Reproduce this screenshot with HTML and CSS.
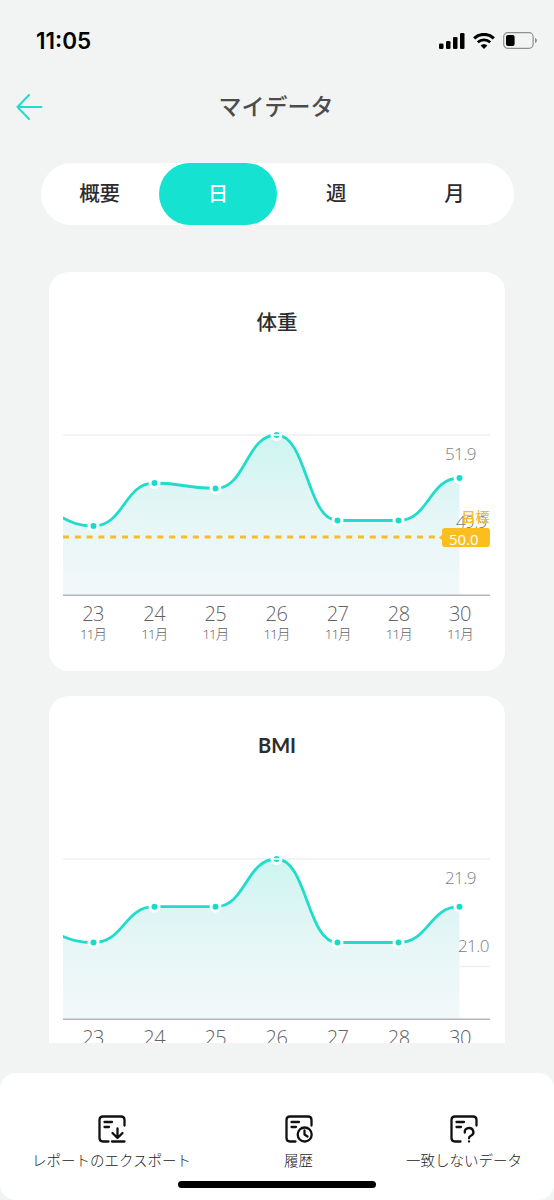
FILE: index.html
```
<!DOCTYPE html>
<html lang="ja">
<head>
  <meta charset="utf-8">
  <title>マイデータ</title>
  <meta name="viewport" content="width=device-width, initial-scale=1.0">
  <link rel="stylesheet" href="styles.css">
</head>
<body>
  <div class="status-bar">
    <span class="time">11:05</span>
    <div class="status-icons">
      <svg class="signal" width="26" height="16" viewBox="0 0 26 16">
        <rect x="0" y="10.5" width="4.5" height="5.5" rx="1.3"/>
        <rect x="7" y="8" width="4.5" height="8" rx="1.3"/>
        <rect x="14" y="4" width="4.5" height="12" rx="1.3"/>
        <rect x="21" y="0" width="4.5" height="16" rx="1.3"/>
      </svg>
      <svg class="wifi" width="22" height="16" viewBox="0 0 22 16">
        <path d="M1.2 5.4a14.2 14.2 0 0 1 19.6 0" fill="none" stroke="#000" stroke-width="3.2"/>
        <path d="M4.8 9.3a9.2 9.2 0 0 1 12.4 0" fill="none" stroke="#000" stroke-width="2.9"/>
        <path d="M7.6 12.6a5 5 0 0 1 6.8 0L11 16z"/>
      </svg>
      <svg class="battery" width="34" height="17" viewBox="0 0 34 17">
        <rect x=".7" y=".7" width="29.4" height="15.6" rx="4" fill="none" stroke="#8e8f8f" stroke-width="1.2"/>
        <rect x="3" y="3" width="8.6" height="11" rx="2"/>
        <path d="M32 5.8v5.4q2-1 2-2.7t-2-2.7z" fill="#8e8f8f"/>
      </svg>
    </div>
  </div>

  <div class="app-bar">
    <svg class="back" width="27" height="26" viewBox="0 0 27 26">
      <path d="M13 1L1.5 13L13 25M1.5 13H25.5"/>
    </svg>
    <h1>マイデータ</h1>
  </div>

  <div class="tabs">
    <div class="tab">概要</div>
    <div class="tab active">日</div>
    <div class="tab">週</div>
    <div class="tab">月</div>
  </div>

  <div class="main-content">
    <div class="card">
      <h2>体重</h2>
      <svg class="chart" width="427" height="170" viewBox="0 0 427 170">
        <defs>
          <linearGradient id="fill" gradientUnits="userSpaceOnUse" x1="0" y1="8" x2="0" y2="170">
            <stop offset="0" stop-color="#cdf5f1"/>
            <stop offset=".55" stop-color="#e7f6f6"/>
            <stop offset="1" stop-color="#f3f8fa"/>
          </linearGradient>
        </defs>
        <path class="grid" d="M0 9H427M0 116.5H427"/>
        <path class="area" d="M-30.5 84C0 84 0 100 30.5 100S61 57 91.5 57S122 62.5 152.5 62.5S183 9 213.5 9S244 94.5 274.5 94.5H335.5C366 94.5 366 52 396.5 52V169H-30.5z"/>
        <path class="line" d="M-30.5 84C0 84 0 100 30.5 100S61 57 91.5 57S122 62.5 152.5 62.5S183 9 213.5 9S244 94.5 274.5 94.5H335.5C366 94.5 366 52 396.5 52"/>
        <path class="goal-line" d="M0 111H377"/>
        <g class="dots">
          <circle cx="30.5" cy="100" r="4.5"/>
          <circle cx="91.5" cy="57" r="4.5"/>
          <circle cx="152.5" cy="62.5" r="4.5"/>
          <circle cx="213.5" cy="9" r="4.5"/>
          <circle cx="274.5" cy="94.5" r="4.5"/>
          <circle cx="335.5" cy="94.5" r="4.5"/>
          <circle cx="396.5" cy="52" r="4.5"/>
        </g>
        <path class="dot-cut" d="M209 9H218"/>
        <path class="axis" d="M0 170H427"/>
        <text class="value" x="382" y="34">51.9</text>
        <text class="value" x="393" y="102">49.9</text>
        <text class="goal-label" x="398.5" y="96">目標</text>
        <path class="goal-tag" d="M382 102H424a3 3 0 0 1 3 3v13a3 3 0 0 1-3 3H382a3 3 0 0 1-3-3V114L376 111.5L379 109V105a3 3 0 0 1 3-3z"/>
        <text class="goal-value" x="386" y="118.5">50.0</text>
      </svg>
      <div class="days">
        <div><b>23</b><span>11月</span></div>
        <div><b>24</b><span>11月</span></div>
        <div><b>25</b><span>11月</span></div>
        <div><b>26</b><span>11月</span></div>
        <div><b>27</b><span>11月</span></div>
        <div><b>28</b><span>11月</span></div>
        <div><b>30</b><span>11月</span></div>
      </div>
    </div>

    <div class="card">
      <h2 class="latin">BMI</h2>
      <svg class="chart" width="427" height="170" viewBox="0 0 427 170">
        <path class="grid" d="M0 9H427M0 116.5H427"/>
        <path class="area" d="M-30.5 80.5C0 80.5 0 92.5 30.5 92.5S61 56.7 91.5 56.7H152.5C183 56.7 183 9 213.5 9S244 92.5 274.5 92.5H335.5C366 92.5 366 56.7 396.5 56.7V169H-30.5z"/>
        <path class="line" d="M-30.5 80.5C0 80.5 0 92.5 30.5 92.5S61 56.7 91.5 56.7H152.5C183 56.7 183 9 213.5 9S244 92.5 274.5 92.5H335.5C366 92.5 366 56.7 396.5 56.7"/>
        <g class="dots">
          <circle cx="30.5" cy="92.5" r="4.5"/>
          <circle cx="91.5" cy="56.7" r="4.5"/>
          <circle cx="152.5" cy="56.7" r="4.5"/>
          <circle cx="213.5" cy="9" r="4.5"/>
          <circle cx="274.5" cy="92.5" r="4.5"/>
          <circle cx="335.5" cy="92.5" r="4.5"/>
          <circle cx="396.5" cy="56.7" r="4.5"/>
        </g>
        <path class="dot-cut" d="M209 9H218"/>
        <path class="axis" d="M0 170H427"/>
        <text class="value" x="382" y="34">21.9</text>
        <text class="value" x="395" y="102">21.0</text>
      </svg>
      <div class="days">
        <div><b>23</b><span>11月</span></div>
        <div><b>24</b><span>11月</span></div>
        <div><b>25</b><span>11月</span></div>
        <div><b>26</b><span>11月</span></div>
        <div><b>27</b><span>11月</span></div>
        <div><b>28</b><span>11月</span></div>
        <div><b>30</b><span>11月</span></div>
      </div>
    </div>
  </div>

  <div class="bottom-bar">
    <div class="action">
      <svg width="28" height="28" viewBox="0 0 28 28">
        <path d="M10.5 26.5H5q-3.500 0-3.500-3.500V5q0-3.500 3.500-3.500H23q3.500 0 3.500 3.500V10.500M6.500 7H14M6.500 12H11M19.500 13.500V22.500M14.500 18L19.500 23L24.500 18M14 26.500H26.500"/>
      </svg>
      <span>レポートのエクスポート</span>
    </div>
    <div class="action">
      <svg width="28" height="28" viewBox="0 0 28 28">
        <path d="M10.5 26.5H5q-3.500 0-3.500-3.500V5q0-3.500 3.500-3.500H23q3.500 0 3.500 3.500V10.500M6.500 7H14M6.500 12H11M19.500 15.500V19.500L22.500 21.500"/>
        <circle cx="19.7" cy="19.5" r="7"/>
      </svg>
      <span>履歴</span>
    </div>
    <div class="action">
      <svg width="28" height="28" viewBox="0 0 28 28">
        <path d="M10.5 26.5H5q-3.500 0-3.500-3.500V5q0-3.500 3.500-3.500H23q3.500 0 3.500 3.500V10.500M6.500 7H14M6.500 12H11M14.800 17.500a4.300 4 0 1 1 6.500 3Q19 21.500 19 23.300M19 26.400V26.500"/>
      </svg>
      <span>一致しないデータ</span>
    </div>
    <div class="home-indicator"></div>
  </div>
</body>
</html>
```

FILE: styles.css
```
* {
  box-sizing: border-box;
}

body {
  font-family: 'Noto Sans CJK JP', sans-serif;
  display: flex;
  flex-direction: column;
  height: 1200px;
  margin: 0;
  background-color: #f2f4f4;
  color: #2c2c2e;
  overflow: hidden;
}

.status-bar {
  height: 81px;
  padding: 0 17px 0 36px;
  display: flex;
  justify-content: space-between;
  align-items: center;
}

.time {
  font-family: 'Inter', sans-serif;
  font-size: 22.5px;
  font-weight: 600;
  color: #000;
}

.status-icons {
  display: flex;
  align-items: center;
  gap: 8px;
}

.app-bar {
  height: 50px;
  padding: 0 18px 0 16px;
  display: grid;
  grid-template-columns: 27px 1fr 27px;
  align-items: center;
}

.back {
  margin-top: 2px;
}

.back path {
  fill: none;
  stroke: #24dccb;
  stroke-width: 2;
  stroke-linecap: round;
  stroke-linejoin: round;
}

.app-bar h1 {
  margin: 0 0 2px;
  font-size: 23px;
  font-weight: 500;
  text-align: center;
  color: #4b4d4d;
}

.tabs {
  display: grid;
  grid-template-columns: repeat(4, 1fr);
  height: 62px;
  margin: 31.5px 40.5px 0;
  border-radius: 31px;
  background-color: #fff;
}

.tab {
  font-size: 20.5px;
  font-weight: 500;
  line-height: 58px;
  text-align: center;
  border-radius: 31px;
}

.tab.active {
  background-color: #15e2d1;
  color: #fff;
}

.main-content {
  height: 818.5px;
  padding: 47px 49px 0;
  overflow: hidden;
}

.card {
  height: 399px;
  margin-bottom: 25.5px;
  padding: 34px 14.5px 0;
  border-radius: 20px;
  background-color: #fff;
}

.card h2 {
  margin: 0;
  height: 30px;
  line-height: 30px;
  font-size: 20.5px;
  font-weight: 500;
  text-align: center;
}

.card h2.latin {
  font-family: 'Lato', sans-serif;
  font-size: 20px;
  font-weight: 700;
}

.chart {
  display: block;
  margin-top: 90px;
  margin-left: -0.5px;
}

.grid {
  stroke: #efefef;
  stroke-width: 1.5;
}

.area {
  fill: url(#fill);
}

.line {
  fill: none;
  stroke: #1fdccb;
  stroke-width: 2.8;
}

.dots circle {
  fill: #15dccb;
  stroke: #fff;
  stroke-width: 3;
}

.dot-cut {
  stroke: #fff;
  stroke-width: 1.5;
}

.axis {
  stroke: #b2b5b8;
  stroke-width: 3;
}

.value {
  font-family: 'Open Sans', sans-serif;
  font-size: 17px;
  font-weight: 300;
  letter-spacing: -0.6px;
  fill: #7c7c85;
}

.goal-line {
  stroke: #f5bd27;
  stroke-width: 3;
  stroke-dasharray: 6 5.8;
}

.goal-tag {
  fill: #fabe1e;
}

.goal-label {
  font-size: 14px;
  font-weight: 500;
  fill: #fabe1e;
}

.goal-value {
  font-family: 'Open Sans', sans-serif;
  font-size: 15px;
  font-weight: 400;
  fill: #fff;
}

.days {
  display: grid;
  grid-template-columns: repeat(7, 1fr);
  margin-top: 6px;
  margin-left: -1px;
  text-align: center;
  color: #626265;
}

.days b {
  display: block;
  font-family: 'Open Sans', sans-serif;
  font-size: 20px;
  font-weight: 300;
  letter-spacing: -0.5px;
  line-height: 24px;
}

.days span {
  display: block;
  font-family: 'Open Sans', 'Noto Sans CJK JP', sans-serif;
  font-size: 13.5px;
  font-weight: 300;
  letter-spacing: -1px;
  line-height: 17px;
}

.bottom-bar {
  position: relative;
  display: flex;
  justify-content: space-between;
  height: 127px;
  margin-top: 30px;
  padding: 42px 32px 0;
  border-radius: 16px;
  background-color: #fff;
}

.action {
  display: flex;
  flex-direction: column;
  align-items: center;
}

.action svg {
  fill: none;
  stroke: #111;
  stroke-width: 2.3;
  stroke-linecap: round;
  stroke-linejoin: round;
}

.action span {
  margin-top: 6px;
  font-size: 14.5px;
  font-weight: 300;
  line-height: 22px;
  color: #222;
}

.home-indicator {
  position: absolute;
  left: 178px;
  bottom: 12px;
  width: 198px;
  height: 7px;
  border-radius: 4px;
  background-color: #000;
}
```
